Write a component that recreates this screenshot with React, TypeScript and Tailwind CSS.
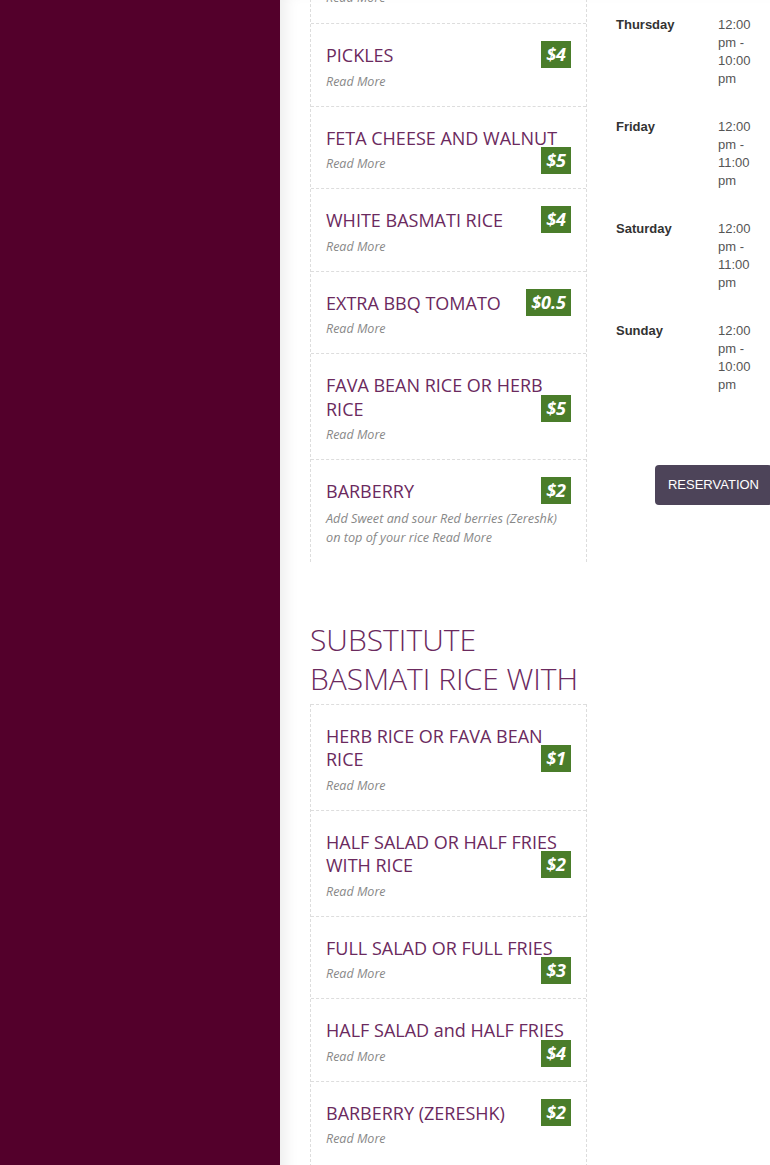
import React from "react";

type Item = {
  title: string;
  price: string;
  desc?: string;
};

const sides: Item[] = [
  { title: "PICKLES", price: "$4" },
  { title: "FETA CHEESE AND WALNUT", price: "$5" },
  { title: "WHITE BASMATI RICE", price: "$4" },
  { title: "EXTRA BBQ TOMATO", price: "$0.5" },
  { title: "FAVA BEAN RICE OR HERB RICE", price: "$5" },
  {
    title: "BARBERRY",
    price: "$2",
    desc: "Add Sweet and sour Red berries (Zereshk) on top of your rice",
  },
];

const substitutes: Item[] = [
  { title: "HERB RICE OR FAVA BEAN RICE", price: "$1" },
  { title: "HALF SALAD OR HALF FRIES WITH RICE", price: "$2" },
  { title: "FULL SALAD OR FULL FRIES", price: "$3" },
  { title: "HALF SALAD and HALF FRIES", price: "$4" },
  { title: "BARBERRY (ZERESHK)", price: "$2" },
];

const hours = [
  { day: "Thursday", time: "12:00 pm - 10:00 pm" },
  { day: "Friday", time: "12:00 pm - 11:00 pm" },
  { day: "Saturday", time: "12:00 pm - 11:00 pm" },
  { day: "Sunday", time: "12:00 pm - 10:00 pm" },
];

const ReadMore = () => <span className="text-[#888]">Read More</span>;

// price floats after the title text: sits on the last title line when it fits, drops below otherwise
const MenuItem = ({ item }: { item: Item }) => (
  <div className="border-t border-dashed border-[#ddd] pt-5 pb-[15px] px-[15px]">
    <h3 className="text-[18px] leading-[23.5px] text-[#6b2a5e]">
      {item.title}
      <span className="float-right -mt-[3px] ml-1 bg-[#4a7d2a] text-white text-[18px] font-bold italic leading-[27px] px-[5px]">
        {item.price}
      </span>
    </h3>
    <p className="mt-[5px] text-[12.5px] leading-[18px] italic text-[#888]">
      {item.desc && <span className="text-[12.7px]">{item.desc} </span>}
      <ReadMore />
    </p>
  </div>
);

export default function App() {
  return (
    <div className="flex min-h-[1165px] w-[770px] overflow-hidden bg-white">
      <aside className="w-[280px] shrink-0 bg-[#53002b]" />

      <main className="flex-1 flex gap-[29px] pl-[30px] shadow-[inset_14px_0_14px_-8px_rgba(0,0,0,0.07)]">
        <section className="w-[277px] shrink-0 font-['Open_Sans',sans-serif]">
          <div className="border-x border-dashed border-[#ddd]">
            <div className="-mt-[11px] pb-4 px-[15px]">
              <p className="text-[12.5px] leading-[18px] italic">
                <ReadMore />
              </p>
            </div>
            {sides.map((item) => (
              <MenuItem key={item.title} item={item} />
            ))}
          </div>

          <h2 className="mt-[58px] mb-[6px] -mr-[4px] text-[30px] leading-[39px] font-light text-[#6b2a5e]">
            SUBSTITUTE BASMATI RICE WITH
          </h2>

          <div className="border-x border-dashed border-[#ddd] pb-6">
            {substitutes.map((item) => (
              <MenuItem key={item.title} item={item} />
            ))}
          </div>
        </section>

        <section className="flex-1 font-['Liberation_Sans',Arial,sans-serif] text-[13px] leading-[18px]">
          <table className="border-collapse">
            <tbody>
              {hours.map((h) => (
                <tr key={h.day}>
                  <td className="w-[102px] align-top pt-4 pb-[14px] font-bold text-[#333]">{h.day}</td>
                  <td className="w-[40px] align-top pt-4 pb-[14px] text-[#555]">{h.time}</td>
                </tr>
              ))}
            </tbody>
          </table>

          <div className="flex justify-end mt-[57px] -mr-[2px]">
            <button className="h-10 px-[13px] rounded-[4px] bg-[#4d4459] text-white text-[13px] uppercase">
              Reservation
            </button>
          </div>
        </section>
      </main>
    </div>
  );
}
